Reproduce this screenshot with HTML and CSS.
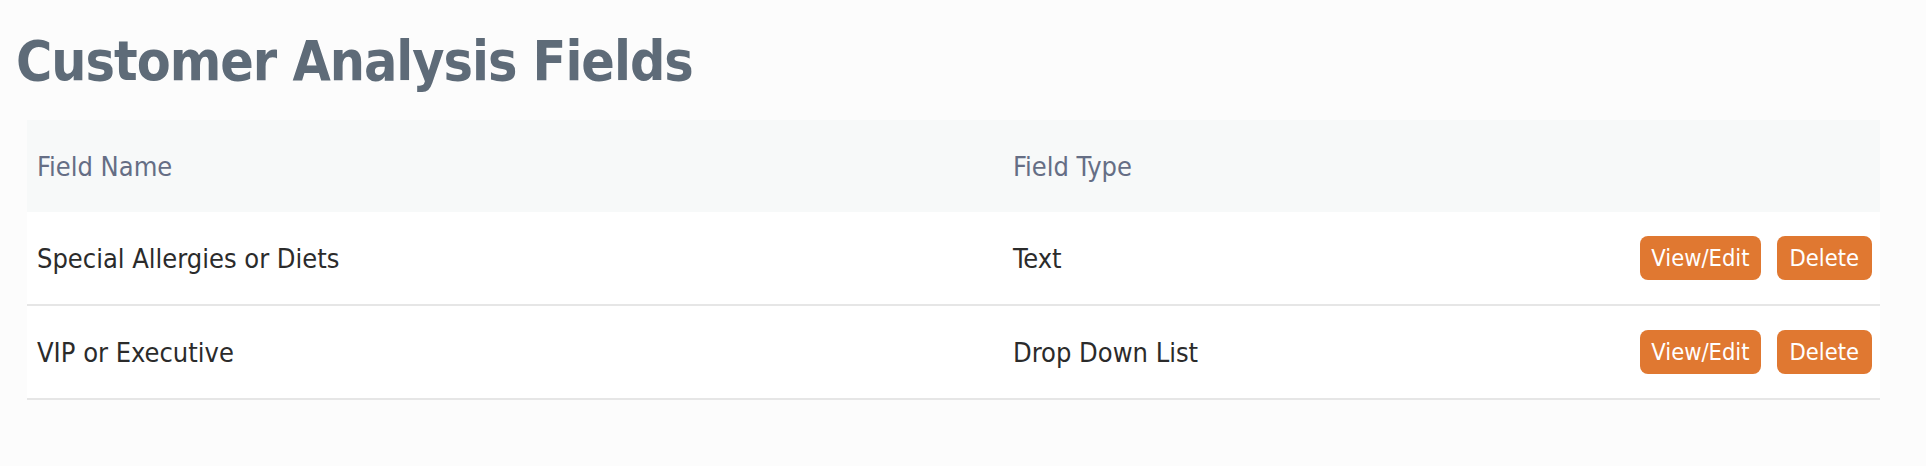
FILE: index.html
```html
<!DOCTYPE html>
<html lang="en">
<head>
<meta charset="utf-8">
<title>Customer Analysis Fields</title>
<link rel="stylesheet" href="styles.css">
</head>
<body>
<main class="page">
  <h1 class="title">Customer Analysis Fields</h1>
  <table class="fields">
    <thead>
      <tr>
        <th class="col-name">Field Name</th>
        <th class="col-type">Field Type</th>
        <th class="col-actions"></th>
      </tr>
    </thead>
    <tbody>
      <tr>
        <td>Special Allergies or Diets</td>
        <td>Text</td>
        <td class="actions"><div class="btns"><button class="btn">View/Edit</button><button class="btn btn-del">Delete</button></div></td>
      </tr>
      <tr>
        <td>VIP or Executive</td>
        <td>Drop Down List</td>
        <td class="actions"><div class="btns"><button class="btn">View/Edit</button><button class="btn btn-del">Delete</button></div></td>
      </tr>
    </tbody>
  </table>
</main>
</body>
</html>
```

FILE: styles.css
```css
html, body {
  margin: 0;
  padding: 0;
  background: #fcfcfc;
}
body {
  font-family: "DejaVu Sans Condensed", "DejaVu Sans", sans-serif;
  font-stretch: condensed;
  color: #2b2b2b;
}
.page {
  padding: 0 46px 0 27px;
}
.title {
  margin: 0 0 0 -11px;
  padding-top: 28px;
  height: 120px;
  box-sizing: border-box;
  font-size: 55px;
  line-height: 66px;
  font-weight: bold;
  letter-spacing: -1px;
  color: #5e6b78;
}
.fields {
  width: 100%;
  border-collapse: collapse;
  background: #ffffff;
  font-size: 27px;
}
.fields thead tr {
  background: #f7f9f9;
}
.fields th {
  height: 92px;
  padding: 0 10px;
  text-align: left;
  font-weight: normal;
  color: #656e85;
  vertical-align: middle;
}
.col-name { width: 956px; }
.col-type { width: 500px; }
.fields td {
  height: 92px;
  padding: 0 10px;
  border-bottom: 2px solid #e6e6e6;
  vertical-align: middle;
}
.fields td.actions {
  padding-right: 8px;
}
.btns {
  display: flex;
  justify-content: flex-end;
  gap: 16px;
}
.btn {
  height: 44px;
  padding: 0 11px;
  border: none;
  border-radius: 8px;
  background: #e07831;
  color: #ffffff;
  font-family: inherit;
  font-stretch: condensed;
  font-size: 23.5px;
  line-height: 44px;
}
.btn-del {
  padding: 0 13px;
}
```
